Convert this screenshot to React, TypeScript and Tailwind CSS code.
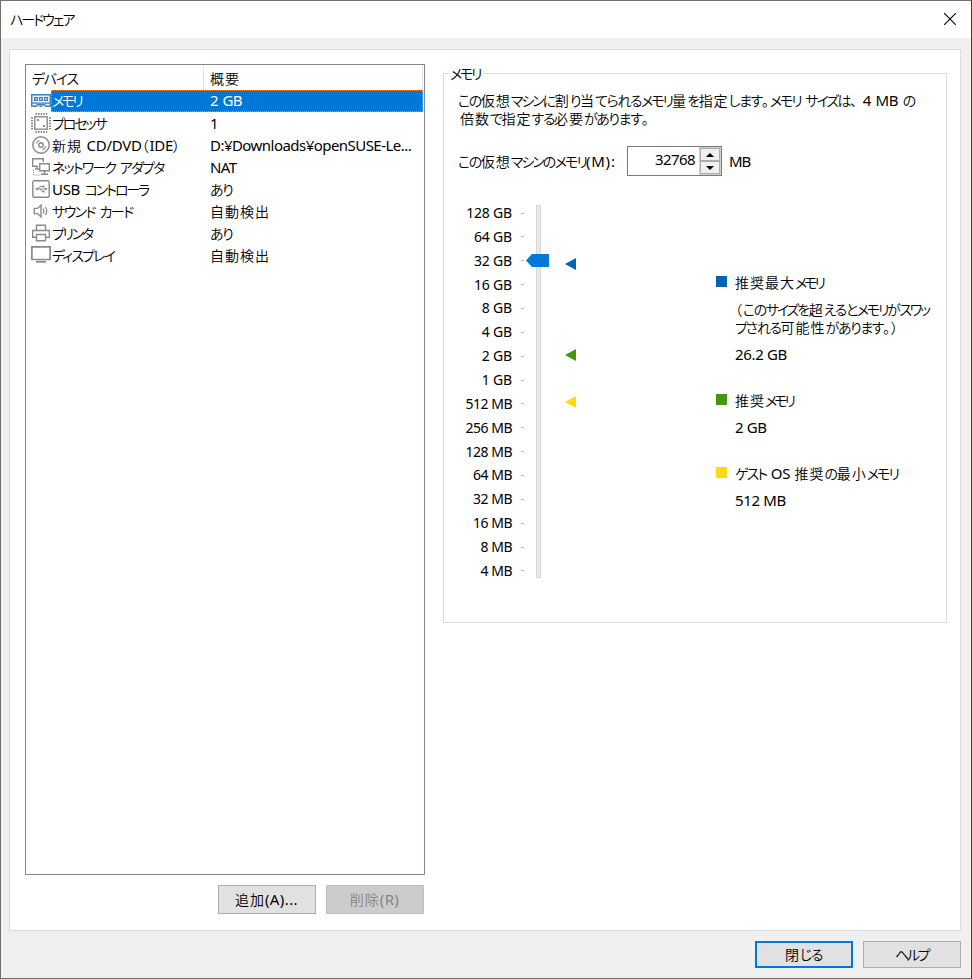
import type { ReactNode } from 'react'
import clsx from 'clsx'

const devices = [
  { name: 'メモリ', summary: '2 GB', icon: <MemoryIcon />, kana: 'tracking-[-2.6px]' },
  { name: 'プロセッサ', summary: '1', icon: <CpuIcon />, kana: 'tracking-[-2.1px]' },
  { name: '新規 CD/DVD（IDE）', summary: 'D:¥Downloads¥openSUSE-Le...', icon: <DiscIcon /> },
  { name: 'ネットワーク アダプタ', summary: 'NAT', icon: <NetworkIcon />, kana: 'tracking-[-1.8px]' },
  { name: 'USB コントローラ', summary: 'あり', icon: <UsbIcon />, kana: 'tracking-[-2.1px]' },
  { name: 'サウンド カード', summary: '自動検出', icon: <SoundIcon />, kana: 'tracking-[-1.6px]' },
  { name: 'プリンタ', summary: 'あり', icon: <PrinterIcon />, kana: 'tracking-[-2.3px]' },
  { name: 'ディスプレイ', summary: '自動検出', icon: <DisplayIcon />, kana: 'tracking-[-1.8px]' },
]

const sizes = [
  '128 GB', '64 GB', '32 GB', '16 GB', '8 GB', '4 GB', '2 GB', '1 GB',
  '512 MB', '256 MB', '128 MB', '64 MB', '32 MB', '16 MB', '8 MB', '4 MB',
]

// Kana are set tighter than kanji, as in a proportional UI gothic
function Txt({ children, kana = 'tracking-[-2px]' }: { children: string; kana?: string }) {
  const runs = children.match(/[\u3040-\u309f]+|[\u30a0-\u30ff]+|[、。（）]+|[\u4e00-\u9fff]+|[^\u3000-\u9fff（）]+/g) ?? []
  return (
    <>
      {runs.map((run, i) => (
        <span
          key={i}
          className={clsx(
            /[\u3040-\u309f]/.test(run) && 'text-[14px] font-[350] tracking-[-1.4px]',
            /[\u30a0-\u30ff]/.test(run) && ['text-[14px] font-[350]', kana],
            /[、。（）]/.test(run) && 'text-[14px] font-[350] tracking-[1px]',
            /[\u4e00-\u9fff]/.test(run) && 'text-[14px] font-[350] tracking-[1px]',
            run.includes(' ') && '[word-spacing:1px]',
          )}
        >
          {run}
        </span>
      ))}
    </>
  )
}

function Icon({ children }: { children: ReactNode }) {
  return (
    <svg width="20" height="20" viewBox="0 0 20 20" fill="none" stroke="#8a8a8a" strokeWidth="1.4" className="mt-px shrink-0">
      {children}
    </svg>
  )
}

function MemoryIcon() {
  return (
    <Icon>
      <path d="M.7 3.7h18.6v11.6h-4.5l-1.3-1.6H6.5l-1.3 1.6H.7z" fill="#e4f1fb" stroke="#3d82bd" />
      <path d="M3.6 6.6h2.8v2.8H3.6zM8.6 6.6h2.8v2.8H8.6zM13.6 6.6h2.8v2.8h-2.8z" stroke="#3d82bd" strokeWidth="1.2" />
      <path d="M1 12.2h18M8.5 15.3h3" stroke="#3d82bd" strokeWidth="1.2" />
    </Icon>
  )
}

function CpuIcon() {
  return (
    <Icon>
      <rect x="3.8" y="3.8" width="12.4" height="12.4" />
      <path d="M4.3 1h12M4.3 19h12M1 4.3v12M19 4.3v12" strokeWidth="2" strokeDasharray="1.5 1.2" />
      <path d="M6 6h2v2H6zM12 12h2v2h-2z" fill="#8a8a8a" stroke="none" />
    </Icon>
  )
}

function DiscIcon() {
  return (
    <Icon>
      <circle cx="10" cy="10" r="8.2" />
      <circle cx="10" cy="10" r="2.2" />
      <path d="M5.3 8.5A5 5 0 0 1 8.5 5.3M14.7 11.5a5 5 0 0 1-3.2 3.2" strokeWidth="1.1" />
    </Icon>
  )
}

function NetworkIcon() {
  return (
    <Icon>
      <path d="M7 9.3H1.7V1.7h10.6V5M4 12h4M6 9.5V12" />
      <path d="M8.7 6.7h9.6v7.1H8.7zM13.5 14v3M10 17.3h7" />
      <path d="M2.5 13v5h7" strokeWidth="1" strokeDasharray="1 1" />
    </Icon>
  )
}

function UsbIcon() {
  return (
    <Icon>
      <rect x="1.8" y="1.8" width="16.4" height="16.4" rx="1.5" />
      <path d="M5 10h10M7 10l2-2.5h3M9 10l2 2.5h1" strokeWidth="1" />
      <path d="M4 10l2.5-1.8v3.6zM14 9h2v2h-2zM11.5 6.5h2v2h-2zM11.5 11.5h2v2h-2z" fill="#8a8a8a" stroke="none" />
    </Icon>
  )
}

function SoundIcon() {
  return (
    <Icon>
      <path d="M3.2 7.4h3.3L10 4.2v11.6l-3.5-3.2H3.2z" />
      <path d="M12 7.5q1.8 2.5 0 5M14.3 6q3 4 0 8" strokeWidth="1.2" />
    </Icon>
  )
}

function PrinterIcon() {
  return (
    <Icon>
      <path d="M5.5 7V2.2h9V7M5 14.3H1.7V7.5h16.6v6.8H15" />
      <path d="M5.5 11.5h9v6.2h-9z" />
    </Icon>
  )
}

function DisplayIcon() {
  return (
    <Icon>
      <path d="M.9 1.9h18.2v12.6H.9z" strokeWidth="1.7" />
      <path d="M5 16.8h10" strokeWidth="1.8" />
    </Icon>
  )
}

function Marker({ className }: { className: string }) {
  return (
    <svg width="11" height="12" viewBox="0 0 11 12" className={clsx('absolute left-[114px]', className)}>
      <path d="M11 0v12L0 6z" fill="currentColor" />
    </svg>
  )
}

function DeviceList() {
  return (
    <div className="h-[811px] w-[400px] border border-[#828790] bg-white">
      <div className="flex h-[25px] pl-[6px] leading-[26px]">
        <div className="w-[171px]"><Txt kana="tracking-[-1.3px]">デバイス</Txt></div>
        <div className="w-[220px] border-x border-[#e5e5e5] pl-[6px]"><Txt>概要</Txt></div>
      </div>
      {devices.map((device, i) => (
        <div key={device.name} className={clsx('flex h-[22px] pr-px pl-[5px]', i === 0 ? 'leading-[21px]' : 'leading-[22px]')}>
          {device.icon}
          <div
            className={clsx(
              'flex flex-1',
              i === 0 && 'bg-[#0078d7] text-white outline-1 -outline-offset-1 outline-dotted outline-[#ff8728]',
            )}
          >
            <div className="w-[159px] pl-px tracking-[-0.3px]"><Txt kana={device.kana}>{device.name}</Txt></div>
            <div className="tracking-[-0.54px]">
              {/[a-z]/.test(device.summary) ? device.summary : <Txt>{device.summary}</Txt>}
            </div>
          </div>
        </div>
      ))}
    </div>
  )
}

function MemoryScale() {
  return (
    <div className="relative flex h-[376px] w-[140px]">
      <div className="-mt-px flex h-[376px] w-[61px] flex-col justify-between text-right text-[14px]">
        {sizes.map((size) => (
          <div key={size} className={clsx('h-[18px] leading-[19px]', size.endsWith('MB') ? 'tracking-[-0.5px]' : 'tracking-[-0.2px]')}>
            {size}
          </div>
        ))}
      </div>
      <div className="ml-[9px] flex flex-col justify-between">
        {sizes.map((size) => (
          <div key={size} className="flex h-[18px] items-center">
            <div className="h-px w-[3px] bg-[#b8b8b8]" />
          </div>
        ))}
      </div>
      <div className="mt-px ml-[12px] h-[373px] w-[5px] border border-[#d6d6d6] bg-[#e7eaea]" />
      <svg width="23" height="13" viewBox="0 0 23 13" className="absolute top-[50px] left-[75px]">
        <path d="M0 6.5L6 0h17v13H6z" fill="#0078d7" />
      </svg>
      <Marker className="top-[54px] text-[#0063b1]" />
      <Marker className="top-[145px] text-[#45970d]" />
      <Marker className="top-[192px] text-[#fddb0b]" />
    </div>
  )
}

function Legend({ color, title, note, value, kana }: { color: string; title: string; note?: string[]; value: string; kana: string }) {
  return (
    <div className="flex gap-[8px]">
      <div className={clsx('mt-[3px] size-[11px] shrink-0', color)} />
      <div className="leading-[18px] whitespace-nowrap">
        <div className="h-[18px]"><Txt kana={kana}>{title}</Txt></div>
        {note && (
          <div className="mt-[9px]">
            {note.map((line) => (
              <div key={line} className="h-[18px]"><Txt kana="tracking-[-2.2px]">{line}</Txt></div>
            ))}
          </div>
        )}
        <div className="mt-[9px] h-[18px]">{value}</div>
      </div>
    </div>
  )
}

function Button({ children, className }: { children: string; className: string }) {
  return (
    <button className={clsx('flex items-center justify-center border pr-px tracking-[0.4px]', className)}>
      <span><Txt kana="tracking-[-2.4px]">{children}</Txt></span>
    </button>
  )
}

export default function App() {
  return (
    <div className="flex h-[979px] w-[972px] flex-col overflow-hidden border border-r-[#3a3a3a] border-[#707070] bg-[#f0f0f0] font-['Noto_Sans','Noto_Sans_CJK_JP',sans-serif] text-[15px] tracking-[-0.35px] whitespace-nowrap text-black [font-feature-settings:'palt']">
      <header className="flex h-[37px] items-center justify-between bg-white pr-[15px] pb-px pl-[9px]">
        <span><Txt>ハードウェア</Txt></span>
        <svg width="12" height="12" viewBox="0 0 12 12" stroke="black" strokeWidth="1.1">
          <path d="M0 0l12 12M12 0L0 12" />
        </svg>
      </header>

      <main className="mt-[11px] ml-[8px] flex h-[882px] w-[952px] border border-[#dcdcdc] bg-white pt-[14px] pl-[15px]">
        <div>
          <DeviceList />
          <div className="mt-[10px] flex justify-end gap-[10px] pr-px">
            <Button className="h-[29px] w-[98px] border-[#adadad] bg-[#e1e1e1]">追加(A)...</Button>
            <Button className="h-[29px] w-[98px] border-[#bfbfbf] bg-[#cccccc] text-[#838383]">削除(R)</Button>
          </div>
        </div>

        <fieldset className="mt-0 ml-[18px] h-[559px] w-[504px] border border-[#dcdcdc] pl-[5px]">
          <legend className="h-[18px] pr-[3px] pl-px leading-[18px]"><Txt kana="tracking-[-2.3px]">メモリ</Txt></legend>
          <div className="pt-[9px] pl-[9px] leading-[18px]">
            <p className="h-[18px]"><Txt>この仮想マシンに割り当てられるメモリ量を指定します。メモリ サイズは、 4 MB の</Txt></p>
            <p className="h-[18px] pl-[2px]"><Txt>倍数で指定する必要があります。</Txt></p>
          </div>
          <div className="mt-[19px] flex h-[30px] items-center pl-[9px]">
            <label className="w-[169px] tracking-[0.8px]"><Txt>この仮想マシンのメモリ(M):</Txt></label>
            <div className="flex h-[30px] w-[95px] border border-[#7a7a7a] bg-white">
              <span className="flex-1 pr-[4px] text-right leading-[24px] tracking-[-0.6px]">32768</span>
              <div className="flex w-[22px] flex-col border border-[#d0d0d0] bg-[#f0f0f0]">
                <div className="flex flex-1 items-center justify-center border border-[#acacac]">
                  <svg width="8" height="4" viewBox="0 0 8 4"><path d="M4 0l4 4H0z" /></svg>
                </div>
                <div className="flex flex-1 items-center justify-center border border-[#acacac]">
                  <svg width="8" height="4" viewBox="0 0 8 4"><path d="M0 0h8L4 4z" /></svg>
                </div>
              </div>
            </div>
            <span className="ml-[7px] tracking-[-1px]">MB</span>
          </div>
          <div className="mt-[28px] flex pl-[2px]">
            <MemoryScale />
            <div className="mt-[69px] ml-[125px] flex flex-col gap-[28px]">
              <Legend
                color="bg-[#0063b1]"
                title="推奨最大メモリ"
                note={['（このサイズを超えるとメモリがスワッ', 'プされる可能性があります。）']}
                value="26.2 GB"
                kana="tracking-[-3px]"
              />
              <Legend color="bg-[#45970d]" title="推奨メモリ" value="2 GB" kana="tracking-[-3px]" />
              <Legend color="bg-[#fddb0b]" title="ゲスト OS 推奨の最小メモリ" value="512 MB" kana="tracking-[-1.9px]" />
            </div>
          </div>
        </fieldset>
      </main>

      <footer className="mt-[10px] flex justify-end gap-[10px] pr-[10px]">
        <Button className="h-[27px] w-[98px] border-2 border-[#0078d7] bg-[#e1e1e1]">閉じる</Button>
        <Button className="h-[27px] w-[98px] border-[#adadad] bg-[#e1e1e1]">ヘルプ</Button>
      </footer>
    </div>
  )
}
